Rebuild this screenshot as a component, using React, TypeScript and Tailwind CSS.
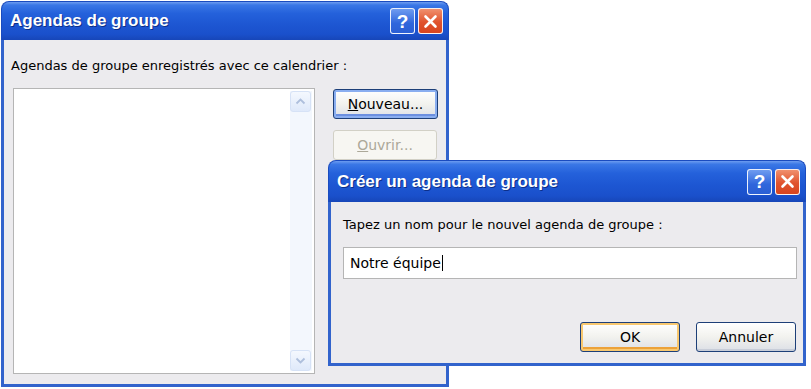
import React from "react";

const font = { fontFamily: "Tahoma, 'DejaVu Sans', 'Liberation Sans', sans-serif" };
const titleFont = { fontFamily: "'Liberation Sans', Arial, sans-serif" };

function TitleButtons() {
  return (
    <div className="flex items-center gap-[3px]">
      <div className="flex h-[26px] w-[25px] items-center justify-center rounded-[3px] border border-white/90 bg-[linear-gradient(to_bottom,#6f9cf0,#2f66dc_60%,#2b5fd4)] text-[19px] font-bold leading-none text-white" style={titleFont}>
        ?
      </div>
      <div className="flex h-[26px] w-[25px] items-center justify-center rounded-[3px] border border-white/90 bg-[linear-gradient(to_bottom,#f0906e,#e0532e_55%,#d8451f)]">
        <svg width="15" height="15" viewBox="0 0 15 15">
          <path d="M2.5 2.5l10 10M12.5 2.5l-10 10" stroke="white" strokeWidth={2.6} strokeLinecap="round" />
        </svg>
      </div>
    </div>
  );
}

function TitleBar({ title, h }: { title: string; h: string }) {
  return (
    <div
      className={`flex ${h} items-center justify-between rounded-t-[8px] border-x border-t border-[#1a4bbf] bg-[linear-gradient(to_bottom,#6d9cf0_0%,#3a77e6_8%,#2461db_30%,#1d56d2_60%,#1a50cb_85%,#1746b8_100%)] pl-[8px] pr-[5px]`}
    >
      <span className="text-[17px] font-bold text-white [text-shadow:1px_1px_0_#0c2f8a]" style={titleFont}>
        {title}
      </span>
      <TitleButtons />
    </div>
  );
}

function XpButton({ children, variant = "normal", className = "" }: { children: React.ReactNode; variant?: "normal" | "default" | "hot" | "disabled"; className?: string }) {
  const ring =
    variant === "default"
      ? "shadow-[inset_0_0_0_2px_#8aaef0,inset_0_-2px_0_2px_#6b8fe0]"
      : variant === "hot"
      ? "shadow-[inset_0_0_0_2px_#f8c870,inset_0_-2px_0_2px_#eca23a]"
      : "shadow-[inset_0_-2px_0_0_#c8cdd8]";
  if (variant === "disabled") {
    return (
      <div className={`flex items-center justify-center rounded-[3px] border border-[#d2d0c6] bg-[#f7f6f2] text-[14px] text-[#aca899] ${className}`}>
        {children}
      </div>
    );
  }
  return (
    <div className={`flex items-center justify-center rounded-[3px] border border-[#1d3f78] bg-[linear-gradient(to_bottom,#ffffff,#f2f2ee_50%,#dcdfe6)] text-[14px] text-black ${ring} ${className}`}>
      {children}
    </div>
  );
}

function ScrollArrow({ up }: { up?: boolean }) {
  return (
    <div className="flex h-[21px] w-[21px] items-center justify-center rounded-[3px] border border-[#d6e2f6] bg-[linear-gradient(to_bottom,#f4f8fe,#dfe9fa)]">
      <svg width="11" height="7" viewBox="0 0 11 7">
        <path d={up ? "M1.5 5.5l4-4 4 4" : "M1.5 1.5l4 4 4-4"} fill="none" stroke="#aebfdc" strokeWidth={1.8} />
      </svg>
    </div>
  );
}

export default function App() {
  return (
    <div className="relative h-[389px] w-[811px] overflow-hidden bg-white" style={font}>
      {/* Fenêtre principale */}
      <div className="absolute left-[1px] top-[1px] flex h-[386px] w-[448px] flex-col">
        <TitleBar title="Agendas de groupe" h="h-[39px]" />
        <div className="flex flex-1 flex-col border-x-[3px] border-b-[3px] border-[#3263cc] bg-[#ecebee] pl-[7px] pr-[7px] pt-[18px]">
          <div className="text-[13px] leading-[16px] text-black">Agendas de groupe enregistrés avec ce calendrier :</div>
          <div className="mt-[14px] flex gap-[18px] pl-[2px]">
            <div className="flex h-[286px] w-[302px] justify-end border border-[#b5b5b5] bg-white p-[2px]">
              <div className="flex w-[22px] flex-col justify-between bg-[#f3f7fd]">
                <ScrollArrow up />
                <ScrollArrow />
              </div>
            </div>
            <div className="flex flex-col gap-[11px] pt-[1px]">
              <XpButton variant="default" className="h-[30px] w-[105px]">
                <span><span className="underline">N</span>ouveau...</span>
              </XpButton>
              <XpButton variant="disabled" className="h-[30px] w-[104px]">
                <span><span className="underline">O</span>uvrir...</span>
              </XpButton>
            </div>
          </div>
        </div>
      </div>

      {/* Fenêtre de création */}
      <div className="absolute left-[328px] top-[160px] flex h-[206px] w-[478px] flex-col">
        <TitleBar title="Créer un agenda de groupe" h="h-[42px]" />
        <div className="flex flex-1 flex-col border-x-[3px] border-b-[3px] border-[#3263cc] bg-[#ecebee] pl-[12px] pr-[6px] pt-[15px]">
          <div className="text-[13px] leading-[16px] text-black">Tapez un nom pour le nouvel agenda de groupe :</div>
          <div className="mt-[14px] flex h-[32px] w-[454px] items-center border border-[#b5b5b5] bg-white pl-[6px] text-[14px] text-black">
            Notre équipe<span className="ml-[1px] inline-block h-[16px] w-[1px] bg-black" />
          </div>
          <div className="mt-[43px] flex justify-end gap-[16px] pr-[1px]">
            <XpButton variant="hot" className="h-[30px] w-[100px]">OK</XpButton>
            <XpButton className="h-[30px] w-[100px]">Annuler</XpButton>
          </div>
        </div>
      </div>
    </div>
  );
}
